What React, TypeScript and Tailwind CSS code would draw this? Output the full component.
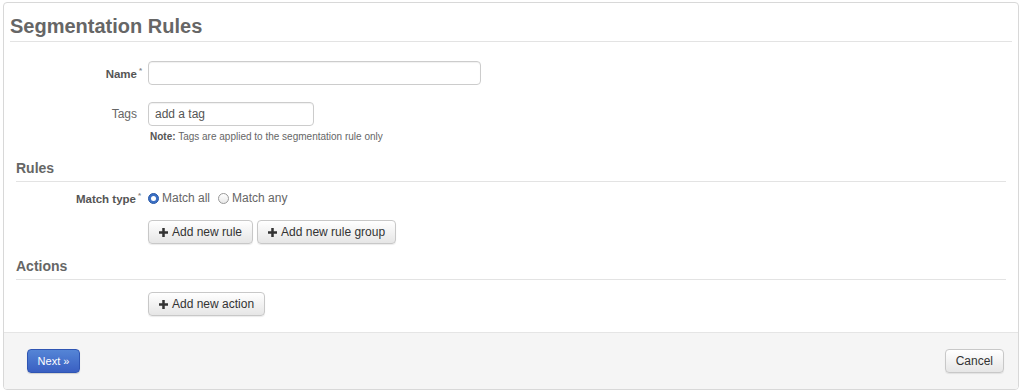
import React, { useState } from 'react';

const Plus = () => (
  <svg viewBox="0 0 10 10" className="w-[9px] h-[9px] mr-[4px]" fill="#333">
    <path d="M3.6 0h2.8v3.6H10v2.8H6.4V10H3.6V6.4H0V3.6h3.6z" />
  </svg>
);

const Req = () => (
  <span className="absolute -right-[5px] -top-[3px] text-[8px] text-[#888]">*</span>
);

const btn =
  'h-[24px] px-[10px] flex items-center text-[12px] text-[#333] rounded-[4px] border border-[#c8c8c8] bg-gradient-to-b from-white to-[#e6e6e6] shadow-[0_1px_1px_rgba(0,0,0,0.08)]';

const Radio = ({ checked, onClick, label }: { checked: boolean; onClick: () => void; label: string }) => (
  <label className="flex items-center cursor-pointer" onClick={onClick}>
    {checked ? (
      <span className="w-[11px] h-[11px] rounded-full bg-[#3b6fc4] border border-[#2a5aa8] flex items-center justify-center mr-[3px]">
        <span className="w-[5px] h-[5px] rounded-full bg-white" />
      </span>
    ) : (
      <span className="w-[11px] h-[11px] rounded-full bg-gradient-to-b from-white to-[#e8e8e8] border border-[#999] mr-[3px]" />
    )}
    <span className="text-[12px] text-[#666]">{label}</span>
  </label>
);

const App = () => {
  const [matchAll, setMatchAll] = useState(true);

  return (
    <div className="w-[1024px] h-[391px] bg-white pt-[2px] pl-[3px] font-['Liberation_Sans',Arial,sans-serif]">
      <div className="w-[1016px] h-[388px] border border-[#d8d8d8] rounded-[4px] flex flex-col overflow-hidden">
        <div className="px-[6px] pt-[9px]">
          <h1 className="text-[20px] leading-[28px] font-bold text-[#666] pb-[1px] border-b border-[#e3e3e3]">
            Segmentation Rules
          </h1>
        </div>

        <div className="flex-1 px-[12px]">
          <div className="flex items-center mt-[19px]">
            <div className="w-[122px] text-right pr-[1px]">
              <span className="relative text-[11.5px] font-bold text-[#555]">
                Name
                <Req />
              </span>
            </div>
            <input className="ml-[10px] w-[333px] h-[24px] border border-[#ccc] rounded-[4px] px-[6px] text-[12px] shadow-[inset_0_1px_1px_rgba(0,0,0,0.06)] outline-none" />
          </div>

          <div className="flex items-start mt-[16px]">
            <div className="w-[122px] text-right pr-[1px]">
              <span className="text-[12px] text-[#666]">Tags</span>
            </div>
            <div className="ml-[10px]">
              <input
                placeholder="add a tag"
                className="w-[166px] h-[24px] border border-[#ccc] rounded-[4px] px-[6px] text-[12px] text-[#555] placeholder:text-[#555] shadow-[inset_0_1px_1px_rgba(0,0,0,0.06)] outline-none"
              />
              <p className="mt-[4px] text-[10px] leading-[14px] text-[#666] pl-[2px]">
                <span className="font-bold text-[#555]">Note:</span> Tags are applied to the segmentation rule only
              </p>
            </div>
          </div>

          <h2 className="mt-[14px] text-[14px] leading-[20px] font-bold text-[#666] pb-[3px] border-b border-[#e3e3e3]">
            Rules
          </h2>

          <div className="flex items-center mt-[7px] h-[18px]">
            <div className="w-[120px] text-right">
              <span className="relative text-[11.5px] font-bold text-[#555]">
                Match type
                <Req />
              </span>
            </div>
            <div className="ml-[12px] flex items-center gap-[8px]">
              <Radio checked={matchAll} onClick={() => setMatchAll(true)} label="Match all" />
              <Radio checked={!matchAll} onClick={() => setMatchAll(false)} label="Match any" />
            </div>
          </div>

          <div className="flex mt-[13px] ml-[132px] gap-[4px]">
            <button className={btn}>
              <Plus />
              Add new rule
            </button>
            <button className={btn}>
              <Plus />
              Add new rule group
            </button>
          </div>

          <h2 className="mt-[12px] text-[14px] leading-[20px] font-bold text-[#666] pb-[3px] border-b border-[#e3e3e3]">
            Actions
          </h2>

          <div className="flex mt-[12px] ml-[132px]">
            <button className={btn}>
              <Plus />
              Add new action
            </button>
          </div>
        </div>

        <div className="h-[57px] border-t border-[#e5e5e5] bg-[#f5f5f5] flex items-center justify-between pl-[23px] pr-[14px]">
          <button className="h-[24px] w-[53px] rounded-[4px] border border-[#2f55b3] bg-gradient-to-b from-[#5585d6] to-[#3a5fc2] text-white text-[11px] shadow-[0_1px_1px_rgba(0,0,0,0.15)]">
            Next »
          </button>
          <button className={btn}>Cancel</button>
        </div>
      </div>
    </div>
  );
};

export default App;
